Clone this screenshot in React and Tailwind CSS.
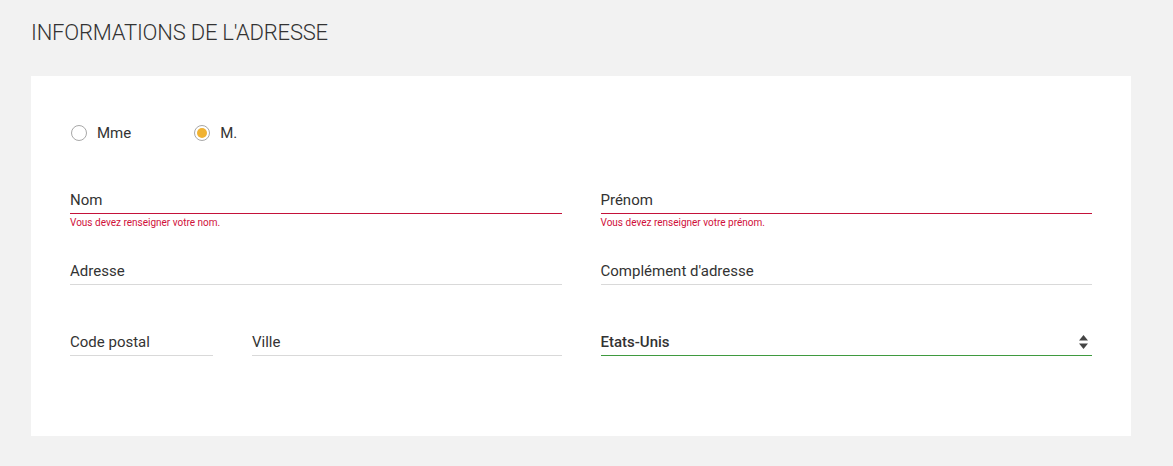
import React from "react";

const font = { fontFamily: "Roboto, 'Noto Sans', sans-serif" };

const Radio = ({ label, checked }) => (
  <label className="flex items-center gap-[10px] cursor-pointer">
    <span className="flex h-[16px] w-[16px] items-center justify-center rounded-full border border-[#a8a8a8] bg-white">
      {checked && <span className="h-[10px] w-[10px] rounded-full bg-[#f0b232]" />}
    </span>
    <span className="text-[15px] leading-[20px] text-[#333]">{label}</span>
  </label>
);

const Field = ({ label, error, className = "" }) => (
  <div className={className}>
    <div
      className={`pb-[3px] border-b text-[15px] leading-[20px] text-[#333] ${
        error ? "border-[#c4123a]" : "border-[#d9d9d9]"
      }`}
    >
      {label}
    </div>
    {error && (
      <div className="mt-[2px] text-[10px] leading-[14px] text-[#d0103a]">{error}</div>
    )}
  </div>
);

const ArrowsIcon = () => (
  <svg width="9" height="14" viewBox="0 0 9 14" className="text-[#444]">
    <path d="M4.5 0 L9 5.5 H0 Z" fill="currentColor" />
    <path d="M0 8.5 H9 L4.5 14 Z" fill="currentColor" />
  </svg>
);

export default function App() {
  return (
    <div className="min-h-screen bg-[#f2f2f2] px-[31px] pt-[19px] pb-[30px]" style={font}>
      <h1 className="text-[22px] leading-[28px] font-light text-[#333] tracking-[-0.2px]">
        INFORMATIONS DE L'ADRESSE
      </h1>

      <div className="mt-[29px] w-[1100px] bg-white px-[39px] pt-[47px] pb-[80px]">
        <div className="flex items-center gap-[63px] pl-[1px] h-[20px]">
          <Radio label="Mme" />
          <Radio label="M." checked />
        </div>

        <div className="mt-[47px] grid grid-cols-2 gap-x-[39px]">
          <Field label="Nom" error="Vous devez renseigner votre nom." />
          <Field label="Prénom" error="Vous devez renseigner votre prénom." />
        </div>

        <div className="mt-[31px] grid grid-cols-2 gap-x-[39px]">
          <Field label="Adresse" />
          <Field label="Complément d'adresse" />
        </div>

        <div className="mt-[47px] grid grid-cols-2 gap-x-[39px]">
          <div className="flex gap-[39px]">
            <Field label="Code postal" className="w-[143px]" />
            <Field label="Ville" className="flex-1" />
          </div>
          <div className="flex items-center justify-between pb-[3px] border-b border-[#3f9a3f] h-[24px]">
            <span className="text-[15px] leading-[20px] font-medium text-[#333]">Etats-Unis</span>
            <span className="mr-[4px]">
              <ArrowsIcon />
            </span>
          </div>
        </div>
      </div>
    </div>
  );
}
